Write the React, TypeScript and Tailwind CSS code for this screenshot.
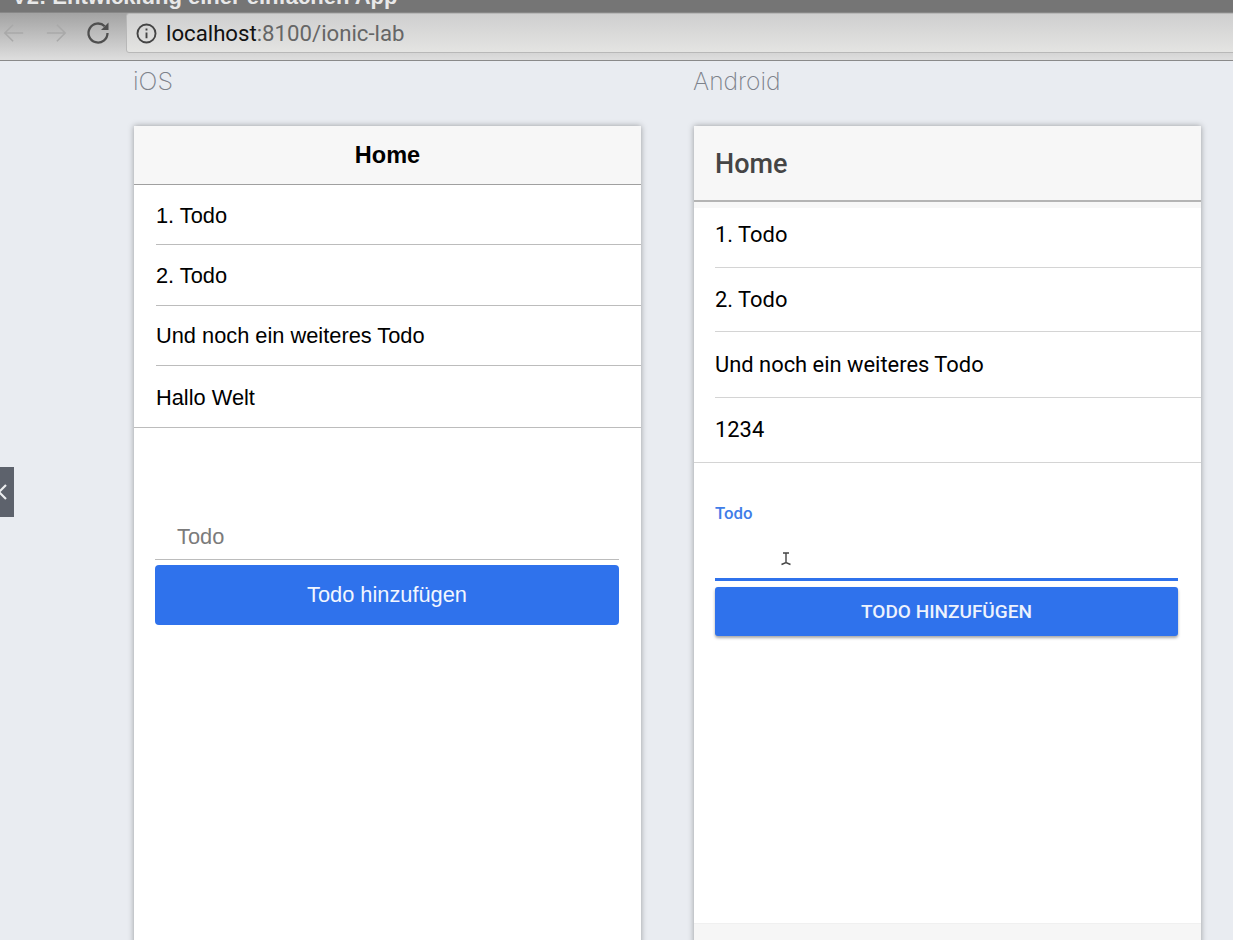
import React from "react";

const mdFont = "font-['Roboto',sans-serif]";

function IosRow({ text, h, pad }: { text: string; h: string; pad: string }) {
  return (
    <div className={`${h} pl-[22px]`}>
      <div className={`h-full flex items-center border-b border-[#bcbcbc] text-[21.8px] text-black ${pad}`}>{text}</div>
    </div>
  );
}

function MdRow({ text, h, pad }: { text: string; h: string; pad: string }) {
  return (
    <div className={`${h} pl-[21px]`}>
      <div className={`h-full flex items-center border-b border-[#d4d4d4] text-[21.9px] text-black ${pad}`}>{text}</div>
    </div>
  );
}

export default function App() {
  return (
    <div className="w-[1233px] h-[940px] overflow-hidden bg-[#e9ecf1] relative font-['Liberation_Sans',sans-serif]">
      {/* Browser chrome */}
      <div className="h-[13px] bg-[#757575] border-b border-[#878787] overflow-hidden">
        <div className="pl-[12px] -mt-[15px] text-[22px] leading-[24px] font-bold text-[#e8e8e8] whitespace-nowrap">V2: Entwicklung einer einfachen App</div>
      </div>
      <div className="h-[48px] bg-gradient-to-b from-[#a3a3a3] to-[#dedede] border-b border-[#8a8a8a] flex items-start relative">
        <div className="w-[126px] h-[40px] flex items-center pl-[3px]">
          <svg width="22" height="22" viewBox="0 0 24 24" fill="none" stroke="#a9a9a9" strokeWidth="1.7"><path d="M22 12H2M11 3l-9 9 9 9" /></svg>
          <svg width="22" height="22" viewBox="0 0 24 24" fill="none" stroke="#a9a9a9" strokeWidth="1.7" className="ml-[20px]"><path d="M2 12h20M13 3l9 9-9 9" /></svg>
          <svg width="24" height="24" viewBox="0 0 24 24" fill="none" stroke="#4f4f4f" strokeWidth="2.3" className="ml-[19px]"><path d="M21.5 12a9.5 9.5 0 1 1-2.8-6.7" /><path d="M22.5 1.5V9H15" fill="#4f4f4f" stroke="none" /></svg>
        </div>
        <div className="flex-1 h-[40px] mr-[-6px] rounded-l-[3px] border border-[#b8b8b8] bg-gradient-to-b from-[#cfcfcf] to-[#e4e4e2] flex items-center pl-[9px] gap-[9px]">
          <svg width="21" height="21" viewBox="0 0 20 20" fill="none" stroke="#444" strokeWidth="1.8"><circle cx="10" cy="10" r="8.6" /><path d="M10 9v5.5M10 5.2v2" /></svg>
          <div className={`${mdFont} text-[22.2px] leading-none`}>
            <span className="text-[#111]">localhost</span><span className="text-[#666]">:8100/ionic-lab</span>
          </div>
        </div>
      </div>

      {/* Lab content */}
      <div className="pl-[134px] flex gap-[53px]">
        {/* iOS */}
        <div className="w-[507px]">
          <div className="h-[65px] pt-[7px] -ml-[1px] text-[25px] leading-[26px] font-['Inter',sans-serif] font-extralight text-[#7d828b]">iOS</div>
          <div className="h-[900px] bg-white shadow-[0_0_6px_rgba(0,0,0,0.35)]">
            <div className="h-[59px] bg-[#f7f7f7] border-b border-[#a0a0a0] flex items-center justify-center pt-[2px] text-[23.5px] font-bold text-black">Home</div>
            <IosRow text="1. Todo" h="h-[60px]" pad="pt-[3px]" />
            <IosRow text="2. Todo" h="h-[61px]" pad="pt-[2px]" />
            <IosRow text="Und noch ein weiteres Todo" h="h-[60px]" pad="pt-[2px]" />
            <div className="h-[62px] pl-[22px] pt-[3px] border-b border-[#bcbcbc] flex items-center text-[21.8px] text-black">Hallo Welt</div>
            <div className="pl-[21px] pr-[22px]">
              <div className="h-[132px] border-b border-[#bcbcbc] flex items-end pb-[8px] pl-[22px] text-[21.8px] leading-[28px] text-[#7b7b7b]">Todo</div>
              <div className="mt-[5px] h-[60px] rounded-[4px] bg-[#2f72ec] flex items-center justify-center text-[21.8px] text-[#f2f6ff]">Todo hinzufügen</div>
            </div>
          </div>
        </div>

        {/* Android */}
        <div className={`w-[507px] ${mdFont}`}>
          <div className="h-[65px] pt-[7px] -ml-[1px] text-[24.6px] leading-[26px] font-['Inter',sans-serif] font-extralight text-[#7d828b]">Android</div>
          <div className="h-[900px] bg-white shadow-[0_0_6px_rgba(0,0,0,0.35)] flex flex-col">
            <div className="h-[76px] bg-[#f7f7f7] border-b-2 border-[#b4b4b4] flex items-center pl-[21px] pt-[3px] text-[27px] font-medium text-[#454545]">Home</div>
            <div className="h-[6px] bg-[#f7f7f7]" />
            <MdRow text="1. Todo" h="h-[60px]" pad="pb-[5px]" />
            <MdRow text="2. Todo" h="h-[64px]" pad="pt-[1px]" />
            <MdRow text="Und noch ein weiteres Todo" h="h-[66px]" pad="pt-[2px]" />
            <div className="h-[65px] pl-[21px] border-b border-[#d4d4d4] flex items-center text-[21.9px] text-black">1234</div>
            <div className="pl-[21px] pr-[23px]">
              <div className="h-[118px] border-b-[3px] border-[#2f72ec] relative">
                <div className="pt-[40px] text-[16.8px] leading-[20px] font-medium text-[#3f7de8]">Todo</div>
                <svg width="12" height="14" viewBox="0 0 12 14" fill="none" stroke="#444" strokeWidth="1.4" className="absolute left-[65px] top-[89px]">
                  <path d="M3 1h6M6 1v10M1.5 12.5 6 10.5l4.5 2" />
                </svg>
              </div>
              <div className="mt-[6px] h-[49px] rounded-[3px] bg-[#2f72ec] shadow-[0_2px_3px_rgba(0,0,0,0.35)] flex items-center justify-center pt-[1px] text-[19px] font-medium text-[#edf2fd]">TODO HINZUFÜGEN</div>
            </div>
          </div>
        </div>
      </div>

      {/* Android footer peeking at the bottom */}
      <div className="absolute left-[694px] top-[923px] w-[507px] h-[17px] bg-[#f6f6f6] border-t border-[#f0f0f0]" />

      {/* Side collapse tab */}
      <div className="absolute left-0 top-[467px] w-[14px] h-[50px] bg-[#5d626c] flex items-center overflow-hidden">
        <svg width="12" height="20" viewBox="0 0 12 20" fill="none" stroke="#eceef0" strokeWidth="2.2" className="-ml-[4px]"><path d="M10 3 3 10l7 7" /></svg>
      </div>
    </div>
  );
}
